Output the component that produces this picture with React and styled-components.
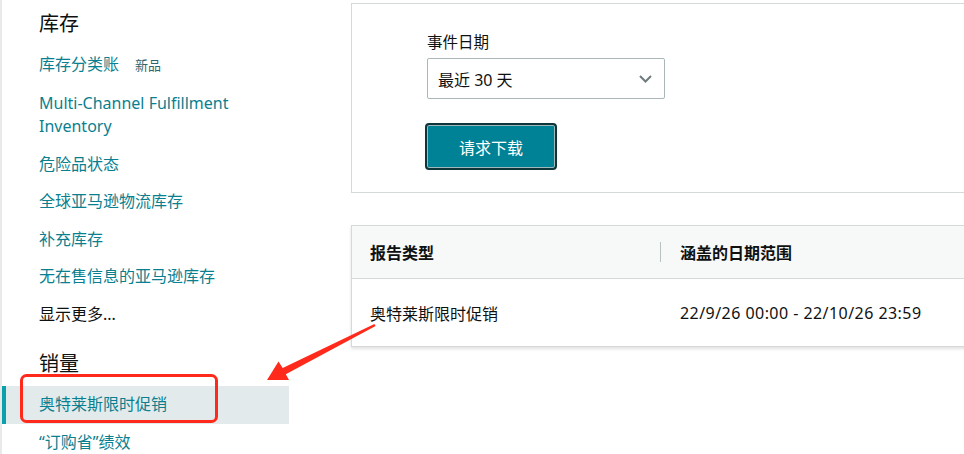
import React from "react";
import styled, { createGlobalStyle } from "styled-components";

const Global = createGlobalStyle`
  html, body { margin: 0; padding: 0; background: #ffffff; overflow: hidden; }
  body { font-family: "Noto Sans", "Noto Sans CJK SC", sans-serif; color: #0f1111; }
`;

const Page = styled.div`
  position: relative;
  width: 964px;
  height: 454px;
  overflow: hidden;
  display: flex;
  align-items: flex-start;
`;

const Sidebar = styled.nav`
  flex: 0 0 289px;
  box-sizing: border-box;
  border-left: 2px solid #e8eaea;
  padding-top: 10px;
  min-height: 454px;
`;

const SectionTitle = styled.h2`
  margin: ${(p) => (p.$first ? "0" : "17px")} 0 8px;
  padding-left: 37px;
  font-size: 20px;
  font-weight: 400;
  line-height: 28px;
  color: #0f1111;
`;

const NavItem = styled.a`
  position: relative;
  display: block;
  padding: 7px 22px 7px 37px;
  font-size: 16px;
  line-height: 23.5px;
  color: ${(p) => (p.$plain ? "#0f1111" : "#0a7f8f")};
  background: ${(p) => (p.$active ? "#e3eaeb" : "transparent")};
  text-decoration: none;
  &::before {
    content: "";
    display: ${(p) => (p.$active ? "block" : "none")};
    position: absolute;
    left: 0;
    top: 0;
    bottom: 0;
    width: 4px;
    background: #0aa0ac;
  }
`;

const NewBadge = styled.span`
  margin-left: 16px;
  font-size: 13px;
  color: #2e6670;
`;

const Main = styled.main`
  flex: 0 0 760px;
  margin-left: 62px;
  padding-top: 3px;
  display: flex;
  flex-direction: column;
  gap: 32px;
`;

const RequestPanel = styled.section`
  box-sizing: border-box;
  height: 190px;
  border: 1px solid #d5d9d9;
  padding: 27px 0 0 75px;
  display: flex;
  flex-direction: column;
  align-items: flex-start;
`;

const FieldLabel = styled.label`
  font-size: 15.5px;
  line-height: 22px;
  color: #0f1111;
`;

const Select = styled.div`
  box-sizing: border-box;
  margin-top: 5px;
  width: 238px;
  height: 41px;
  border: 1px solid #a9b7b9;
  border-radius: 2px;
  background: #fff;
  display: flex;
  align-items: center;
  justify-content: space-between;
  padding: 0 12px 0 10px;
  font-size: 16px;
  color: #0f1111;
`;

const PrimaryButton = styled.button`
  box-sizing: border-box;
  margin: 24px 0 0 -2px;
  width: 132px;
  height: 47px;
  border: 2px solid #0d353a;
  border-radius: 4px;
  background: #008296;
  color: #ffffff;
  font-family: inherit;
  font-size: 16px;
  box-shadow: 0 0 0 1px #9fb9bd inset;
`;

const Table = styled.section`
  border: 1px solid #d5d9d9;
  box-shadow: 0 2px 3px rgba(0, 0, 0, 0.12);
`;

const HeaderRow = styled.div`
  display: grid;
  grid-template-columns: 308px 1fr;
  height: 52px;
  background: #f7f8f8;
  border-bottom: 1px solid #d5d9d9;
`;

const HeaderCell = styled.div`
  display: flex;
  align-items: center;
  padding-left: ${(p) => (p.$first ? "18px" : "0")};
  font-size: 16px;
  font-weight: 700;
  color: #0f1111;
`;

const ColDivider = styled.span`
  width: 1px;
  height: 20px;
  background: #b9c2c2;
  margin-right: 19px;
`;

const BodyRow = styled.div`
  display: grid;
  grid-template-columns: 308px 1fr;
  height: 67px;
`;

const BodyCell = styled.div`
  display: flex;
  align-items: center;
  padding-left: ${(p) => (p.$first ? "18px" : "20px")};
  font-size: 16px;
  color: #0f1111;
  letter-spacing: ${(p) => (p.$wide ? "0.45px" : "0")};
`;

const Overlay = styled.svg`
  position: absolute;
  left: 0;
  top: 0;
  pointer-events: none;
`;

const Chevron = () => (
  <svg width="13" height="8" viewBox="0 0 13 8">
    <polyline points="1,1 6.5,6.5 12,1" fill="none" stroke="#6f7b7d" strokeWidth="2" />
  </svg>
);

export default function App() {
  return (
    <Page>
      <Global />
      <Sidebar>
        <SectionTitle $first>库存</SectionTitle>
        <NavItem>
          库存分类账<NewBadge>新品</NewBadge>
        </NavItem>
        <NavItem>Multi-Channel Fulfillment Inventory</NavItem>
        <NavItem>危险品状态</NavItem>
        <NavItem>全球亚马逊物流库存</NavItem>
        <NavItem>补充库存</NavItem>
        <NavItem>无在售信息的亚马逊库存</NavItem>
        <NavItem $plain>显示更多...</NavItem>
        <SectionTitle>销量</SectionTitle>
        <NavItem $active>奥特莱斯限时促销</NavItem>
        <NavItem>“订购省”绩效</NavItem>
      </Sidebar>
      <Main>
        <RequestPanel>
          <FieldLabel>事件日期</FieldLabel>
          <Select>
            <span>最近 30 天</span>
            <Chevron />
          </Select>
          <PrimaryButton>请求下载</PrimaryButton>
        </RequestPanel>
        <Table>
          <HeaderRow>
            <HeaderCell $first>报告类型</HeaderCell>
            <HeaderCell>
              <ColDivider />
              涵盖的日期范围
            </HeaderCell>
          </HeaderRow>
          <BodyRow>
            <BodyCell $first>奥特莱斯限时促销</BodyCell>
            <BodyCell $wide>22/9/26 00:00 - 22/10/26 23:59</BodyCell>
          </BodyRow>
        </Table>
      </Main>
      <Overlay width="964" height="454" viewBox="0 0 964 454">
        <rect x="21.5" y="375.5" width="195" height="46" rx="5" ry="5" fill="none" stroke="#ff2a1c" strokeWidth="3" />
        <polygon
          points="267,380 289,380 285.8,374.3 375.6,326.1 374.4,323.9 282.7,368.1 278.5,361.5"
          fill="#ff2a1c"
        />
      </Overlay>
    </Page>
  );
}
